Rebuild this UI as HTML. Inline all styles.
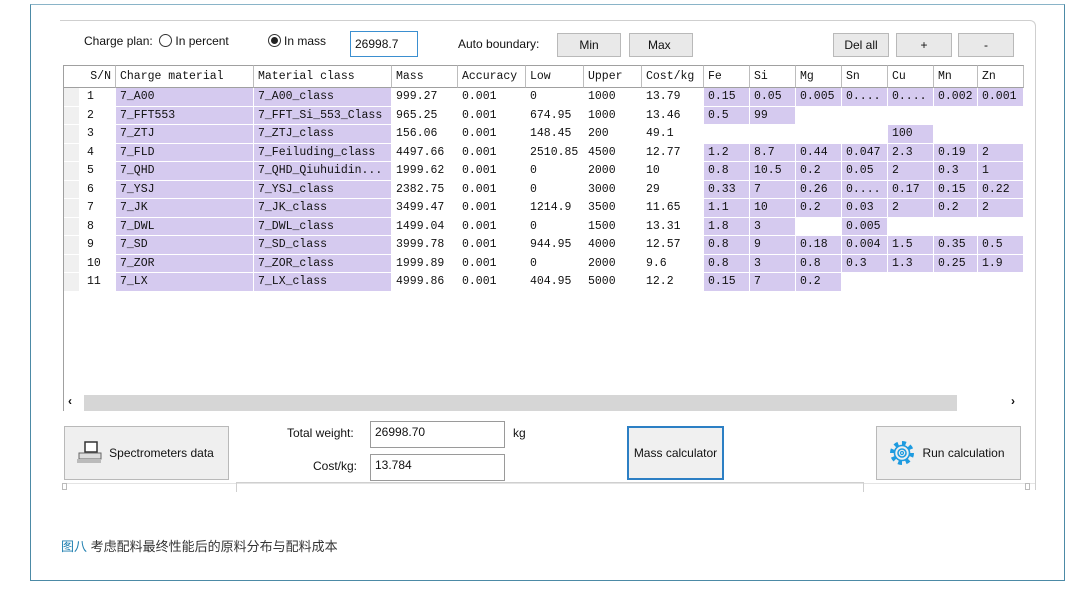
<!DOCTYPE html>
<html><head><meta charset="utf-8">
<style>
*{margin:0;padding:0;box-sizing:border-box}
body{width:1082px;height:589px;background:#fff;position:relative;overflow:hidden;font-family:"Liberation Sans",sans-serif;color:#111}
.a{position:absolute}
.frame{left:30px;top:4px;width:1035px;height:577px;border:1px solid #4c8aa6;border-top-color:#8ab4c8}
.panel{left:60px;top:20px;width:976px;height:470px;border-top:1px solid #cfcfcf;border-right:1px solid #cfcfcf;border-top-right-radius:6px}
.lbl{font-size:12px;white-space:nowrap}
.btn{background:#e9e9e9;border:1px solid #b9b9b9;font-size:12px;text-align:center}
.radio{display:inline-block;width:13px;height:13px;border:1px solid #333;border-radius:50%;vertical-align:-2px;margin-right:3px;position:relative}
.radio.on:after{content:"";position:absolute;left:2px;top:2px;width:7px;height:7px;border-radius:50%;background:#222}
table{position:absolute;left:63px;top:65px;border-collapse:separate;border-spacing:0;table-layout:fixed;font-family:"Liberation Mono",monospace;font-size:11.5px}
td,th{height:18.5px;padding:0 0 0 4px;white-space:nowrap;overflow:hidden;border-right:1px solid #fff;border-bottom:1px solid #fff;text-align:left;font-weight:normal}
th{height:23px;border-right:1px solid #bdbdbd;border-bottom:1px solid #a0a0a0;background:#fff;border-top:1px solid #a0a0a0}
th:first-child{border-left:1px solid #a0a0a0;text-align:right;padding-right:4px}
td:first-child{text-align:left;padding-left:24px;background:linear-gradient(90deg,#f0f0f0 0 16px,#fff 16px)}
.p{background:#d5caef}
.inp{background:#fff;border:1px solid #9a9a9a;font-size:12px;padding:3px 4px}
</style></head><body>
<div class="a frame"></div>
<div class="a panel"></div>

<div class="a lbl" style="left:84px;top:34px">Charge plan:&nbsp; <span class="radio"></span>In percent</div>
<div class="a lbl" style="left:268px;top:34px"><span class="radio on"></span>In mass</div>
<div class="a inp" style="left:350px;top:31px;width:68px;height:26px;border:1px solid #3b8fd0;padding-top:5px">26998.7</div>
<div class="a lbl" style="left:458px;top:37px">Auto boundary:</div>
<div class="a btn" style="left:557px;top:33px;width:64px;height:24px;line-height:22px">Min</div>
<div class="a btn" style="left:629px;top:33px;width:64px;height:24px;line-height:22px;text-align:left;padding-left:18px">Max</div>
<div class="a btn" style="left:833px;top:33px;width:56px;height:24px;line-height:22px">Del all</div>
<div class="a btn" style="left:896px;top:33px;width:56px;height:24px;line-height:22px">+</div>
<div class="a btn" style="left:958px;top:33px;width:56px;height:24px;line-height:22px">-</div>

<table>
<colgroup><col style="width:53px"><col style="width:138px"><col style="width:138px"><col style="width:66px"><col style="width:68px"><col style="width:58px"><col style="width:58px"><col style="width:62px"><col style="width:46px"><col style="width:46px"><col style="width:46px"><col style="width:46px"><col style="width:46px"><col style="width:44px"><col style="width:46px"></colgroup>
<tr><th>S/N</th><th>Charge material</th><th>Material class</th><th>Mass</th><th>Accuracy</th><th>Low</th><th>Upper</th><th>Cost/kg</th><th>Fe</th><th>Si</th><th>Mg</th><th>Sn</th><th>Cu</th><th>Mn</th><th>Zn</th></tr>
<tr><td>1</td><td class="p">7_A00</td><td class="p">7_A00_class</td><td>999.27</td><td>0.001</td><td>0</td><td>1000</td><td>13.79</td><td class="p">0.15</td><td class="p">0.05</td><td class="p">0.005</td><td class="p">0....</td><td class="p">0....</td><td class="p">0.002</td><td class="p">0.001</td></tr>
<tr><td>2</td><td class="p">7_FFT553</td><td class="p">7_FFT_Si_553_Class</td><td>965.25</td><td>0.001</td><td>674.95</td><td>1000</td><td>13.46</td><td class="p">0.5</td><td class="p">99</td><td></td><td></td><td></td><td></td><td></td></tr>
<tr><td>3</td><td class="p">7_ZTJ</td><td class="p">7_ZTJ_class</td><td>156.06</td><td>0.001</td><td>148.45</td><td>200</td><td>49.1</td><td></td><td></td><td></td><td></td><td class="p">100</td><td></td><td></td></tr>
<tr><td>4</td><td class="p">7_FLD</td><td class="p">7_Feiluding_class</td><td>4497.66</td><td>0.001</td><td>2510.85</td><td>4500</td><td>12.77</td><td class="p">1.2</td><td class="p">8.7</td><td class="p">0.44</td><td class="p">0.047</td><td class="p">2.3</td><td class="p">0.19</td><td class="p">2</td></tr>
<tr><td>5</td><td class="p">7_QHD</td><td class="p">7_QHD_Qiuhuidin...</td><td>1999.62</td><td>0.001</td><td>0</td><td>2000</td><td>10</td><td class="p">0.8</td><td class="p">10.5</td><td class="p">0.2</td><td class="p">0.05</td><td class="p">2</td><td class="p">0.3</td><td class="p">1</td></tr>
<tr><td>6</td><td class="p">7_YSJ</td><td class="p">7_YSJ_class</td><td>2382.75</td><td>0.001</td><td>0</td><td>3000</td><td>29</td><td class="p">0.33</td><td class="p">7</td><td class="p">0.26</td><td class="p">0....</td><td class="p">0.17</td><td class="p">0.15</td><td class="p">0.22</td></tr>
<tr><td>7</td><td class="p">7_JK</td><td class="p">7_JK_class</td><td>3499.47</td><td>0.001</td><td>1214.9</td><td>3500</td><td>11.65</td><td class="p">1.1</td><td class="p">10</td><td class="p">0.2</td><td class="p">0.03</td><td class="p">2</td><td class="p">0.2</td><td class="p">2</td></tr>
<tr><td>8</td><td class="p">7_DWL</td><td class="p">7_DWL_class</td><td>1499.04</td><td>0.001</td><td>0</td><td>1500</td><td>13.31</td><td class="p">1.8</td><td class="p">3</td><td></td><td class="p">0.005</td><td></td><td></td><td></td></tr>
<tr><td>9</td><td class="p">7_SD</td><td class="p">7_SD_class</td><td>3999.78</td><td>0.001</td><td>944.95</td><td>4000</td><td>12.57</td><td class="p">0.8</td><td class="p">9</td><td class="p">0.18</td><td class="p">0.004</td><td class="p">1.5</td><td class="p">0.35</td><td class="p">0.5</td></tr>
<tr><td>10</td><td class="p">7_ZOR</td><td class="p">7_ZOR_class</td><td>1999.89</td><td>0.001</td><td>0</td><td>2000</td><td>9.6</td><td class="p">0.8</td><td class="p">3</td><td class="p">0.8</td><td class="p">0.3</td><td class="p">1.3</td><td class="p">0.25</td><td class="p">1.9</td></tr>
<tr><td>11</td><td class="p">7_LX</td><td class="p">7_LX_class</td><td>4999.86</td><td>0.001</td><td>404.95</td><td>5000</td><td>12.2</td><td class="p">0.15</td><td class="p">7</td><td class="p">0.2</td><td></td><td></td><td></td><td></td></tr>
</table>
<div class="a" style="left:63px;top:65px;width:1px;height:346px;background:#a0a0a0"></div>
<div class="a" style="left:84px;top:395px;width:873px;height:16px;background:#d6d6d6"></div>
<div class="a lbl" style="left:68px;top:394px;font-weight:bold">‹</div>
<div class="a lbl" style="left:1011px;top:394px;font-weight:bold">›</div>

<div class="a btn" style="left:64px;top:426px;width:165px;height:54px;background:#efefef;font-size:12px;line-height:52px;padding-left:30px">Spectrometers data</div>
<svg class="a" style="left:76px;top:439px" width="28" height="28" viewBox="0 0 28 28"><rect x="9" y="3" width="12" height="10" fill="#fff" stroke="#333" stroke-width="1.5"/><rect x="3" y="14" width="22" height="6" fill="#ddd" stroke="#666"/><rect x="1" y="20" width="24" height="4" fill="#bbb"/></svg>

<div class="a lbl" style="left:287px;top:426px">Total weight:</div>
<div class="a inp" style="left:370px;top:421px;width:135px;height:27px">26998.70</div>
<div class="a lbl" style="left:513px;top:426px">kg</div>
<div class="a lbl" style="left:313px;top:459px">Cost/kg:</div>
<div class="a inp" style="left:370px;top:454px;width:135px;height:27px">13.784</div>
<div class="a btn" style="left:627px;top:426px;width:97px;height:54px;background:#f0f0f0;border:2px solid #2c7fc4;line-height:50px">Mass calculator</div>
<div class="a btn" style="left:876px;top:426px;width:145px;height:54px;background:#efefef;line-height:52px;padding-left:30px">Run calculation</div>
<svg class="a" style="left:889px;top:440px" width="26" height="26" viewBox="0 0 26 26"><g fill="none" stroke="#1e9be0"><circle cx="13" cy="13" r="10" stroke-width="4" stroke-dasharray="3.9 3.9"/><circle cx="13" cy="13" r="7.5" stroke-width="1.6"/><circle cx="13" cy="13" r="4" stroke-width="1.6"/><circle cx="13" cy="13" r="1.5" stroke-width="1.2"/></g></svg>

<div class="a" style="left:62px;top:483px;width:973px;height:1px;background:#e4e4e4"></div>
<div class="a" style="left:236px;top:482px;width:628px;height:10px;border:1px solid #cfcfcf;border-bottom:none"></div>
<div class="a" style="left:62px;top:483px;width:5px;height:7px;border:1px solid #bbb"></div>
<div class="a" style="left:1025px;top:483px;width:5px;height:7px;border:1px solid #bbb"></div>

<div class="a" style="left:61px;top:536px;font-size:13px;font-family:'Liberation Sans','Noto Sans CJK SC',sans-serif;color:#333"><span style="color:#1f7fb0">图八</span> 考虑配料最终性能后的原料分布与配料成本</div>
</body></html>
